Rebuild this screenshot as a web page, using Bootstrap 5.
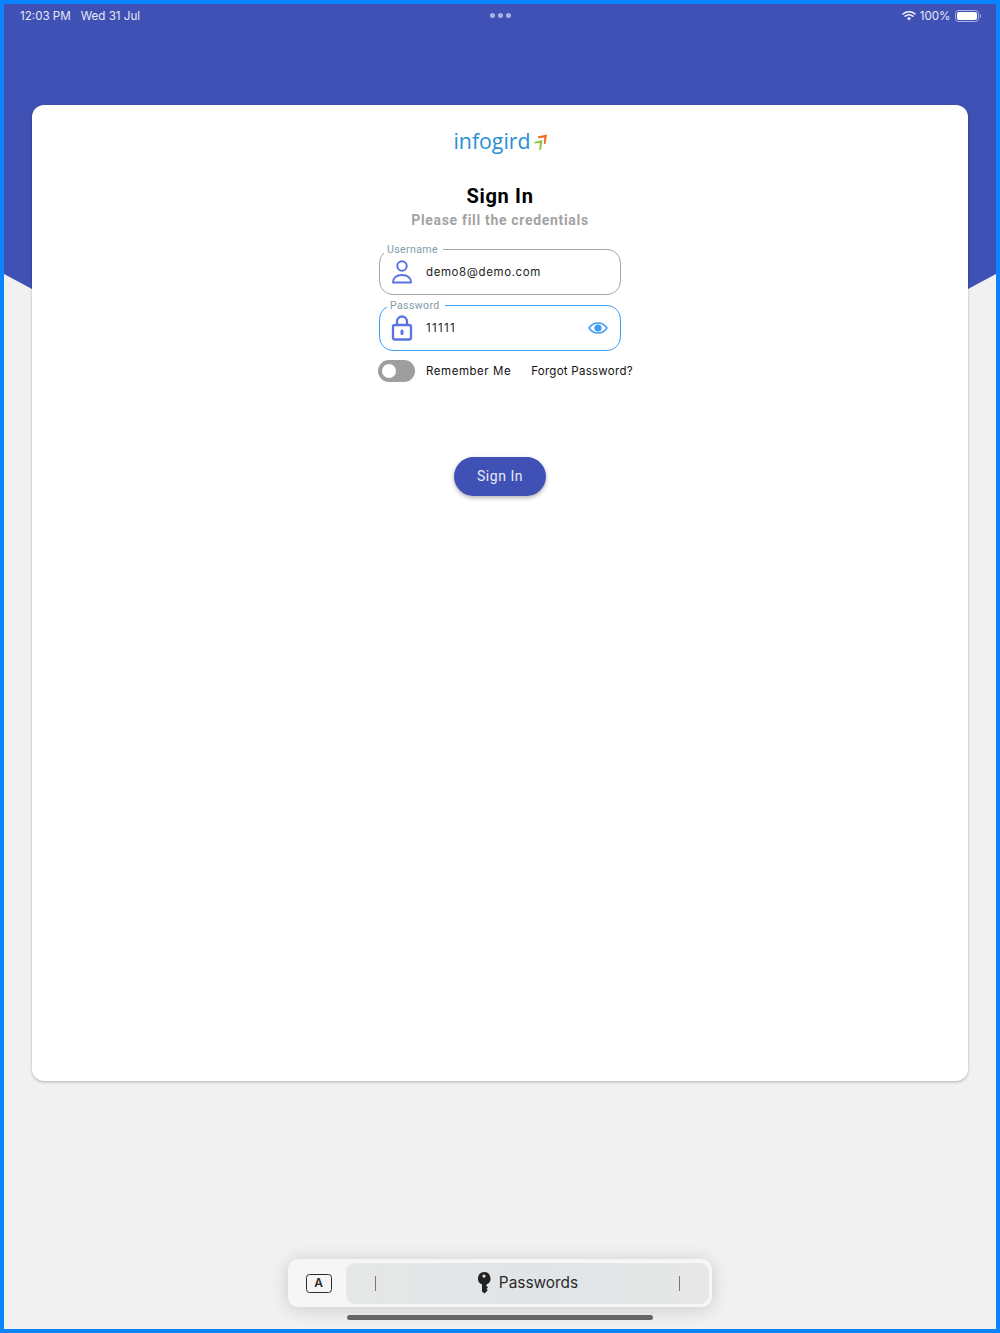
<!DOCTYPE html>
<html>
<head>
    <meta http-equiv="Content-Type" content="text/html;charset=UTF-8">
    <meta name="viewport" content="width=device-width, initial-scale=1.0">
    <link href="https://cdn.jsdelivr.net/npm/bootstrap@5.3.0/dist/css/bootstrap.min.css" rel="stylesheet">
    <style>
        html, body { height: 100%; }
        body { background: #f1f1f1; font-family: Roboto, "Liberation Sans", sans-serif; color: #000; overflow: hidden; }
        .frame { width: 1000px; height: 1333px; border: 4px solid #0a84ff; background: #f1f1f1; overflow: hidden; }
        .hero-bg { top: 0; left: 0; right: 0; height: 285px; background: #3f51b5; clip-path: polygon(0 0, 100% 0, 100% 270px, 964px 285px, 28px 285px, 0 270px); }
        .status-bar { height: 23px; padding: 1px 15px 0 16px; color: #e6e8f6; font-family: Inter, "Liberation Sans", sans-serif; font-size: 11.6px; z-index: 1; }
        .status-bar > span, .status-text { padding-top: 1px; }
        .status-date { margin-left: 10px; }
        .status-dots { gap: 3px; left: 486px; top: 9px; }
        .status-dots span { width: 5px; height: 5px; border-radius: 50%; background: #a9b2e4; }
        .battery { width: 24px; height: 12px; border: 1px solid #a9b2e4; border-radius: 3.5px; padding: 1px; margin-left: 4px; }
        .battery span { display: block; height: 100%; background: #fff; border-radius: 2px; }
        .battery-tip { width: 1.5px; height: 4px; background: #a9b2e4; margin-left: 1px; border-radius: 0 1px 1px 0; }
        .login-panel { width: 936px; height: 976px; margin: 78px 0 0 28px; background: #fff; border-radius: 12px; box-shadow: 0 1px 3px rgba(0,0,0,.28); z-index: 1; padding-top: 21px; }
        .brand { height: 30px; color: #2a8fd6; font-size: 21.3px; line-height: 30px; font-family: "Open Sans", "Liberation Sans", sans-serif; font-weight: 400; gap: 3px; }
        .brand-mark { margin-top: 8px; }
        .title { font-size: 20px; line-height: 24px; font-weight: 700; letter-spacing: .7px; margin: 28px 0 0; }
        .subtitle { font-size: 14px; line-height: 18px; font-weight: 700; color: #a3a3a3; letter-spacing: .68px; margin: 3px 0 20px; }
        .field { width: 242px; height: 46px; border: 1.3px solid #a5a5a5; border-radius: 14px; padding: 0 12px 0 11px; margin-bottom: 10px; }
        .field-active { border-color: #3ea0f5; margin-bottom: 9px; }
        .field-label { top: -6px; left: 4px; padding: 0 5px 0 3px; background: #fff; font-size: 10.6px; line-height: 12px; letter-spacing: .35px; color: #7f9cab; }
        .field-active .field-label { left: 7px; }
        .field-value { font-family: Inter, "Liberation Sans", sans-serif; font-size: 11.5px; letter-spacing: .6px; margin-left: 13px; padding-top: 2px; color: #222; }
        .field-secret { letter-spacing: 1.35px; }
        .remember-row { width: 255px; height: 22px; margin-left: 11px; font-family: Inter, "Liberation Sans", sans-serif; font-size: 11.5px; letter-spacing: .54px; color: #111; white-space: nowrap; }
        .remember-text { padding-top: 2px; }
        .toggle-track { width: 37px; height: 22px; border-radius: 11px; background: #9e9e9e; padding: 4px; margin-right: 11px; flex: none; }
        .toggle-knob { display: block; width: 14px; height: 14px; border-radius: 50%; background: #fff; }
        .forgot { margin-left: 20px; letter-spacing: .27px; }
        .signin-btn { width: 92px; height: 39px; margin-top: 75px; border: 0; border-radius: 20px; background: #3f51b5; color: #e8eaf6; font-size: 14px; letter-spacing: .55px; box-shadow: 0 2px 4px rgba(0,0,0,.3); }
        .key-bar { left: 284px; bottom: 22px; width: 424px; height: 48px; background: #f6f6f6; border-radius: 10px; box-shadow: 0 2px 18px rgba(0,0,0,.17); padding: 3px; z-index: 1; }
        .key-mode { width: 55px; }
        .key-a { width: 26px; height: 19px; border: 1.3px solid #2b2b2b; border-radius: 3.5px; font: 600 12px/16px Inter, "Liberation Sans", sans-serif; color: #2b2b2b; text-align: center; }
        .key-main { width: 363px; height: 41px; background: linear-gradient(90deg, #e6e7e7, #e1e5e8 50%, #e6e7e6); border-radius: 9px; padding: 0 29px; }
        .key-sep { width: 1px; height: 15px; background: #777; }
        .key-text { font-family: Inter, "Liberation Sans", sans-serif; font-size: 15.4px; color: #2a2a2a; gap: 8px; }
        .home-bar { left: 343px; bottom: 9px; width: 306px; height: 5px; background: #666; border-radius: 3px; z-index: 1; }
    </style>
</head>
<body>
    <div class="frame position-relative">
        <div class="hero-bg position-absolute"></div>

        <div class="status-bar position-relative d-flex align-items-center">
            <span>12:03 PM</span>
            <span class="status-date">Wed 31 Jul</span>
            <div class="status-dots position-absolute d-flex"><span></span><span></span><span></span></div>
            <div class="ms-auto d-flex align-items-center">
                <svg width="14" height="11" viewBox="0 0 14 11" class="me-1">
                    <path d="M1 4a9 9 0 0 1 12 0M3.2 6.2a5.8 5.8 0 0 1 7.6 0" fill="none" stroke="#f2f3fb" stroke-width="1.6" stroke-linecap="round"/>
                    <path d="M5 8.2a3 3 0 0 1 4 0L7 10.6z" fill="#f2f3fb"/>
                </svg>
                <span class="status-text">100%</span>
                <div class="battery"><span></span></div>
                <div class="battery-tip"></div>
            </div>
        </div>

        <div class="login-panel position-relative d-flex flex-column align-items-center">
            <div class="brand d-flex">
                <span>infogird</span>
                <svg width="13" height="16" viewBox="0 0 13 16" class="brand-mark">
                    <path d="M3.5 2.5L13 0.5L11.5 10H9.8L10.3 3.5L4.5 4.2z" fill="#ef6c23"/>
                    <path d="M0 8L8.5 6L7 16H5.2L5.800 8.7L1 9.5z" fill="#8cc63f"/>
                </svg>
            </div>
            <h1 class="title">Sign In</h1>
            <p class="subtitle">Please fill the credentials</p>

            <div class="field position-relative d-flex align-items-center">
                <span class="field-label position-absolute">Username</span>
                <svg width="22" height="24" viewBox="0 0 22 24" fill="none" stroke="#5a73e0" stroke-width="2">
                    <circle cx="11" cy="6" r="4.7"/>
                    <path d="M2 22.500c0-4.500 3.500-7.500 9-7.500s9 3 9 7.500z" stroke-linejoin="round"/>
                </svg>
                <span class="field-value">demo8@demo.com</span>
            </div>

            <div class="field field-active position-relative d-flex align-items-center">
                <span class="field-label position-absolute">Password</span>
                <svg width="22" height="26" viewBox="0 0 22 26" fill="none" stroke="#5a73e0" stroke-width="2.3">
                    <rect x="2" y="10" width="18" height="14.5" rx="2"/>
                    <path d="M6 10V6.500a5 5 0 0 1 10 0V10"/>
                    <rect x="9.5" y="14.5" width="3" height="5.5" rx="1.5" fill="#5a73e0" stroke="none"/>
                </svg>
                <span class="field-value field-secret">11111</span>
                <svg width="20" height="12" viewBox="0 0 20 12" class="ms-auto">
                    <path d="M1 6c2.300-3.300 5.300-5 9-5s6.700 1.700 9 5c-2.300 3.300-5.300 5-9 5s-6.700-1.700-9-5z" fill="none" stroke="#3a9cf2" stroke-width="1.5"/>
                    <circle cx="10" cy="6" r="3.6" fill="#3a9cf2"/>
                </svg>
            </div>

            <div class="remember-row d-flex align-items-center">
                <span class="toggle-track"><span class="toggle-knob"></span></span>
                <span class="remember-text">Remember Me</span>
                <span class="remember-text forgot">Forgot Password?</span>
            </div>

            <button type="button" class="signin-btn btn p-0">Sign In</button>
        </div>

        <div class="key-bar position-absolute d-flex align-items-center">
            <div class="key-mode d-flex justify-content-center"><div class="key-a">A</div></div>
            <div class="key-main d-flex align-items-center justify-content-between">
                <span class="key-sep"></span>
                <span class="key-text d-flex align-items-center">
                    <svg width="14" height="22" viewBox="0 0 14 22">
                        <path fill-rule="evenodd" d="M7 0a6.500 6.500 0 0 1 2.500 12.500V14l1.500 1.500-1.500 1.500 1.300 1.300L7.500 21.500 5 19.500v-7A6.500 6.500 0 0 1 7 0zm0 2.500a1.600 1.600 0 1 0 0 3.200 1.600 1.600 0 0 0 0-3.200z" fill="#222"/>
                    </svg>
                    <span>Passwords</span>
                </span>
                <span class="key-sep"></span>
            </div>
        </div>
        <div class="home-bar position-absolute"></div>
    </div>

    <script src="https://cdn.jsdelivr.net/npm/bootstrap@5.3.0/dist/js/bootstrap.bundle.min.js"></script>
</body>
</html>
